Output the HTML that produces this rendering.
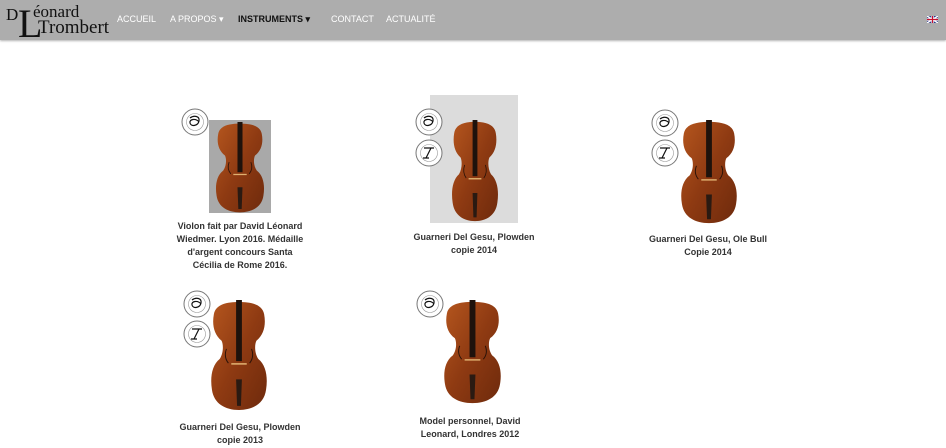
<!DOCTYPE html>
<html><head><meta charset="utf-8">
<style>
body{margin:0;width:946px;height:448px;background:#fff;position:relative;overflow:hidden;font-family:"Liberation Sans",sans-serif}
.nav{position:absolute;left:0;top:0;width:946px;height:40px;background:#adadad;box-shadow:0 1px 2px rgba(0,0,0,.3)}
.nav a{position:absolute;top:14px;font-size:9px;color:#fff;text-decoration:none}
.logo{position:absolute;font-family:"Liberation Serif",serif;color:#111;line-height:1}
.ab{position:absolute}
.cap{position:absolute;font-size:9px;font-weight:bold;color:#333;text-align:center;line-height:13px}
.badge{position:absolute;width:28px;height:28px}
</style></head><body>
<div class="nav">
<span class="logo" style="left:6px;top:6px;font-size:17px">D</span>
<span class="logo" style="left:18px;top:4px;font-size:40px">L</span>
<span class="logo" style="left:33px;top:3px;font-size:17px">éonard</span>
<span class="logo" style="left:38px;top:18px;font-size:19px">Trombert</span>
<a style="left:117px">ACCUEIL</a>
<a style="left:170px">A PROPOS ▾</a>
<a style="left:238px;color:#111;font-weight:bold">INSTRUMENTS ▾</a>
<a style="left:331px">CONTACT</a>
<a style="left:386px">ACTUALITÉ</a>
<svg style="position:absolute;left:927px;top:16px" width="11" height="7" viewBox="0 0 11 7"><rect width="11" height="7" fill="#2a3f8f"/><path d="M0 0L11 7M11 0L0 7" stroke="#fff" stroke-width="1.5"/><path d="M5.5 0V7M0 3.5H11" stroke="#fff" stroke-width="2.4"/><path d="M5.5 0V7M0 3.5H11" stroke="#c8102e" stroke-width="1.2"/></svg>
</div>

<svg width="0" height="0" style="position:absolute">
<defs>
<linearGradient id="g" x1="0" y1="0" x2="1" y2="1"><stop offset="0" stop-color="#b5561e"/><stop offset=".5" stop-color="#8e3a12"/><stop offset="1" stop-color="#6e2a0c"/></linearGradient>
<g id="v">
<path d="M30 2C18 2 6 4 4 14C2 24 4 34 12 40C14 44 14 52 10 58C2 64 0 76 2 88C4 102 16 108 30 108C44 108 56 102 58 88C60 76 58 64 50 58C46 52 46 44 48 40C56 34 58 24 56 14C54 4 42 2 30 2Z" fill="url(#g)"/>
<rect x="27" y="0" width="6" height="60" fill="#1e120c"/>
<rect x="22" y="62" width="16" height="1.5" fill="#e0b070"/>
<path d="M27 78L33 78L32 104L28 104Z" fill="#2a1a12"/>
<path d="M17 48q-3 8 2 14M43 48q3 8 -2 14" stroke="#2a1208" fill="none" stroke-width="1"/>
</g>
<g id="b"><circle cx="14" cy="14" r="13" fill="#fff" stroke="#777" stroke-width="1"/><circle cx="14" cy="14" r="8.5" fill="none" stroke="#999" stroke-width=".6"/><path d="M9 10c4-3 10-2 9 3s-8 6-9 2 6-5 9-1" stroke="#111" fill="none" stroke-width="1.2"/></g>
<g id="b2"><circle cx="14" cy="14" r="13" fill="#fff" stroke="#777" stroke-width="1"/><circle cx="14" cy="14" r="8.5" fill="none" stroke="#999" stroke-width=".6"/><path d="M9 9h10M16 9l-5 10M8 19h6" stroke="#111" fill="none" stroke-width="1.2"/></g>
</defs></svg>

<div class="ab" style="left:209px;top:120px;width:62px;height:93px;background:#a9a9a9"></div>
<svg class="ab" style="left:214px;top:122px" width="52" height="92" viewBox="0 0 60 110"><use href="#v"/></svg>
<svg class="badge" style="left:181px;top:108px"><use href="#b"/></svg>
<div class="cap" style="left:173px;top:220px;width:134px">Violon fait par David Léonard Wiedmer. Lyon 2016. Médaille d'argent concours Santa Cécilia de Rome 2016.</div>

<div class="ab" style="left:430px;top:95px;width:88px;height:128px;background:#dcdcdc"></div>
<svg class="ab" style="left:451px;top:120px" width="48" height="103" viewBox="0 0 60 110" preserveAspectRatio="none"><use href="#v"/></svg>
<svg class="badge" style="left:415px;top:108px"><use href="#b"/></svg>
<svg class="badge" style="left:415px;top:139px"><use href="#b2"/></svg>
<div class="cap" style="left:409px;top:231px;width:130px">Guarneri Del Gesu, Plowden copie 2014</div>

<svg class="ab" style="left:680px;top:120px" width="58" height="105" viewBox="0 0 60 110" preserveAspectRatio="none"><use href="#v"/></svg>
<svg class="badge" style="left:651px;top:109px"><use href="#b"/></svg>
<svg class="badge" style="left:651px;top:139px"><use href="#b2"/></svg>
<div class="cap" style="left:645px;top:233px;width:126px">Guarneri Del Gesu, Ole Bull Copie 2014</div>

<svg class="ab" style="left:210px;top:300px" width="58" height="112" viewBox="0 0 60 110" preserveAspectRatio="none"><use href="#v"/></svg>
<svg class="badge" style="left:183px;top:290px"><use href="#b"/></svg>
<svg class="badge" style="left:183px;top:320px"><use href="#b2"/></svg>
<div class="cap" style="left:175px;top:421px;width:130px">Guarneri Del Gesu, Plowden copie 2013</div>

<svg class="ab" style="left:443px;top:300px" width="59" height="105" viewBox="0 0 60 110" preserveAspectRatio="none"><use href="#v"/></svg>
<svg class="badge" style="left:416px;top:290px"><use href="#b"/></svg>
<div class="cap" style="left:415px;top:415px;width:110px">Model personnel, David Leonard, Londres 2012</div>
</body></html>
